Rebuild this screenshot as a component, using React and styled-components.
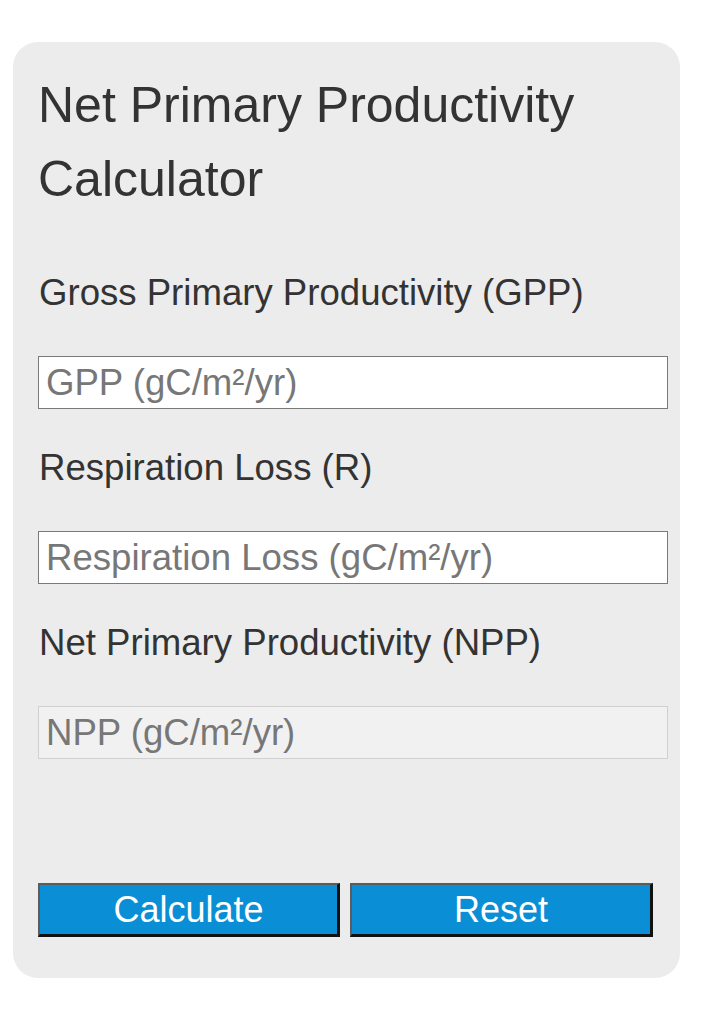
import React, { useState } from 'react';
import styled, { createGlobalStyle } from 'styled-components';

const GlobalStyle = createGlobalStyle`
  body {
    margin: 0;
    background: #ffffff;
    font-family: "Liberation Sans", Arial, sans-serif;
  }
`;

function App() {
  const [gpp, setGpp] = useState('');
  const [loss, setLoss] = useState('');
  const [npp, setNpp] = useState('');

  const calculate = () => {
    const g = parseFloat(gpp);
    const r = parseFloat(loss);
    if (isNaN(g) || isNaN(r)) return;
    setNpp(String(g - r));
  };

  const reset = () => {
    setGpp('');
    setLoss('');
    setNpp('');
  };

  return (
    <>
      <GlobalStyle />
      <Card>
        <Title>Net Primary Productivity Calculator</Title>
        <Fields>
          <Label htmlFor="gpp">Gross Primary Productivity (GPP)</Label>
          <Input
            id="gpp"
            type="text"
            placeholder="GPP (gC/m²/yr)"
            value={gpp}
            onChange={e => setGpp(e.target.value)}
          />
          <Label htmlFor="loss">Respiration Loss (R)</Label>
          <Input
            id="loss"
            type="text"
            placeholder="Respiration Loss (gC/m²/yr)"
            value={loss}
            onChange={e => setLoss(e.target.value)}
          />
          <Label htmlFor="npp">Net Primary Productivity (NPP)</Label>
          <Input
            id="npp"
            type="text"
            placeholder="NPP (gC/m²/yr)"
            value={npp}
            readOnly
            $result
          />
        </Fields>
        <Buttons>
          <Button $width={302} onClick={calculate}>Calculate</Button>
          <Button $width={303} onClick={reset}>Reset</Button>
        </Buttons>
      </Card>
    </>
  );
}

export default App;

const Card = styled.div`
  box-sizing: border-box;
  width: 667px;
  margin: 42px 0 0 13px;
  padding: 26px 12px 41px 25px;
  background: #ececec;
  border-radius: 25px;
  color: #333;
`;

const Title = styled.h1`
  margin: 0;
  font-size: 50px;
  font-weight: normal;
  line-height: 74px;
  width: 600px;
`;

const Fields = styled.div`
  display: flex;
  flex-direction: column;
  margin-top: 50px;
`;

const Label = styled.label`
  display: block;
  font-size: 36.6px;
  line-height: 54px;
  margin-top: 32px;
  padding-left: 1px;

  &:first-child {
    margin-top: 0;
  }
`;

const Input = styled.input`
  box-sizing: border-box;
  width: 630px;
  height: 53px;
  margin-top: 36px;
  padding: 0 7px;
  font-family: "Liberation Sans", Arial, sans-serif;
  font-size: 36.6px;
  color: #333;
  background: ${p => (p.$result ? '#f1f1f1' : '#ffffff')};
  border: 1px solid ${p => (p.$result ? '#d0d0d0' : '#7a7a7a')};
  border-radius: 0;
  outline: none;

  &::placeholder {
    color: #777;
  }
`;

const Buttons = styled.div`
  display: flex;
  gap: 10px;
  margin-top: 124px;
`;

const Button = styled.button`
  box-sizing: border-box;
  width: ${p => p.$width}px;
  height: 54px;
  padding: 0;
  background: #0a8fd6;
  color: #ffffff;
  font-family: "Liberation Sans", Arial, sans-serif;
  font-size: 36px;
  line-height: 1;
  border-style: solid;
  border-width: 2px 3px 3px 2px;
  border-color: #5c5c5c #111 #111 #5c5c5c;
  cursor: pointer;
`;
